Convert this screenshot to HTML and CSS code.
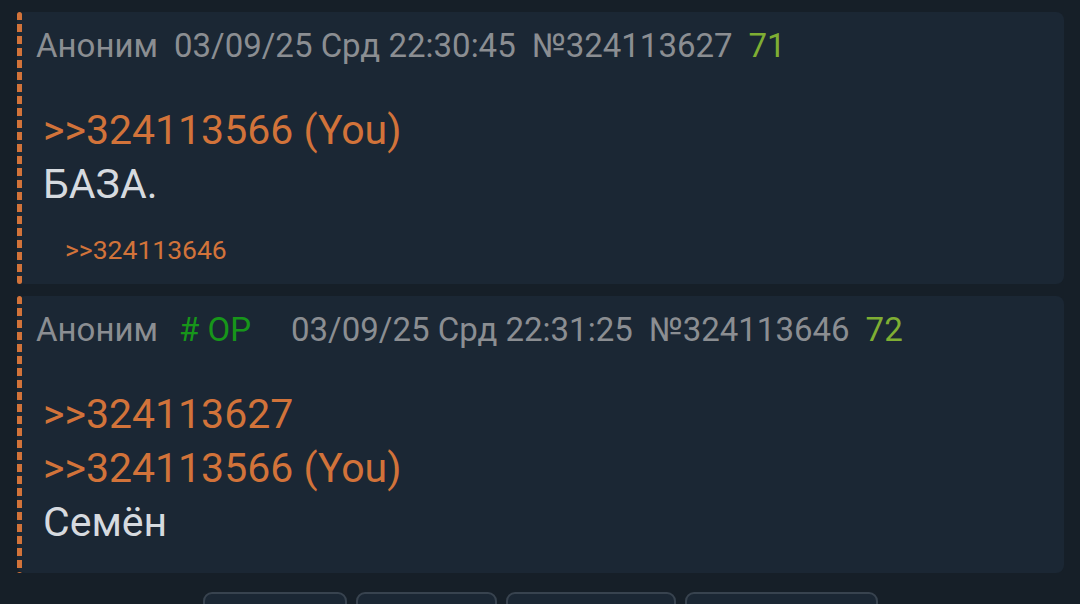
FILE: index.html
```html
<!DOCTYPE html>
<html>
<head>
  <meta charset="utf-8">
  <title>Тред</title>
  <link rel="stylesheet" href="styles.css">
</head>
<body>
  <div class="thread">
    <div class="post">
      <div class="post-head">
        <span class="post-name">Аноним</span>
        <span class="post-date">03/09/25 Срд 22:30:45</span>
        <span class="post-num">№324113627</span>
        <span class="post-count">71</span>
      </div>
      <div class="post-body">
        <a class="post-link" href="#">&gt;&gt;324113566 (You)</a><br>
        БАЗА.
      </div>
      <div class="post-replies">
        <a class="post-link" href="#">&gt;&gt;324113646</a>
      </div>
    </div>

    <div class="post">
      <div class="post-head">
        <span class="post-name">Аноним</span>
        <span class="post-op"># OP</span>
        <span class="post-date">03/09/25 Срд 22:31:25</span>
        <span class="post-num">№324113646</span>
        <span class="post-count">72</span>
      </div>
      <div class="post-body">
        <a class="post-link" href="#">&gt;&gt;324113627</a><br>
        <a class="post-link" href="#">&gt;&gt;324113566 (You)</a><br>
        Семён
      </div>
    </div>

    <div class="thread-nav">
      <button class="nav-btn nav-btn-1"></button>
      <button class="nav-btn nav-btn-2"></button>
      <button class="nav-btn nav-btn-3"></button>
      <button class="nav-btn nav-btn-4"></button>
    </div>
  </div>
</body>
</html>
```

FILE: styles.css
```css
body {
  background-color: #161f28;
  margin: 0;
  font-family: Roboto, "Liberation Sans", sans-serif;
  overflow: hidden;
}

.thread {
  display: flex;
  flex-direction: column;
  gap: 12px;
  padding: 12px 16px 0 17px;
}

.post {
  position: relative;
  background-color: #1b2734;
  border-radius: 8px;
  padding: 14px 15px 24px 19px;
}

/* dashed marker on the left edge */
.post::before {
  content: "";
  position: absolute;
  left: 0;
  top: 0;
  bottom: 0;
  width: 5px;
  border-radius: 3px;
  background: repeating-linear-gradient(
    to bottom,
    #d2733a 0,
    #d2733a 8px,
    transparent 8px,
    transparent 12px
  );
}

.post-head {
  display: flex;
  align-items: baseline;
  gap: 16px;
  font-size: 33px;
  line-height: 40px;
  color: #8b8e92;
  white-space: nowrap;
}

.post-op {
  color: #17961a;
  margin-left: 5px;
  margin-right: 24px;
}

.post-count {
  color: #7fae33;
}

.post-body {
  margin-top: 37px;
  padding-left: 7px;
  font-size: 41px;
  line-height: 54px;
  color: #d6dadf;
}

.post-link {
  color: #d2733a;
  text-decoration: none;
}

.post-replies {
  margin-top: 29px;
  padding-left: 29px;
  font-size: 26.5px;
  line-height: 20px;
}

.thread-nav {
  display: flex;
  justify-content: center;
  gap: 9px;
  margin-top: 7px;
}

.nav-btn {
  height: 44px;
  background-color: #1b2734;
  border: 2px solid #38434f;
  border-radius: 9px;
}

.nav-btn-1 { width: 144px; }
.nav-btn-2 { width: 141px; }
.nav-btn-3 { width: 170px; }
.nav-btn-4 { width: 193px; }
```
